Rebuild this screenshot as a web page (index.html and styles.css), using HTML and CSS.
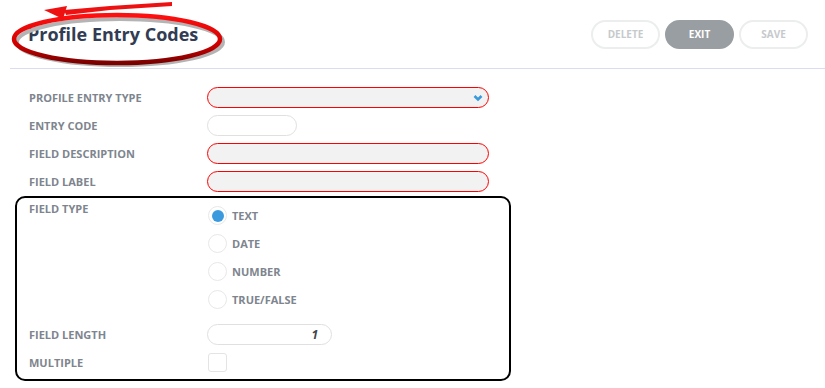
FILE: index.html
```html
<!DOCTYPE html>
<html lang="en">

<head>
    <meta charset="utf-8">
    <meta name="viewport" content="width=device-width, initial-scale=1.0">
    <title>Profile Entry Codes</title>
    <link rel="stylesheet" href="styles.css">
</head>

<body>
    <header class="top">
        <h1 class="title">Profile Entry Codes</h1>
        <div class="actions">
            <button class="btn">DELETE</button>
            <button class="btn btn-dark">EXIT</button>
            <button class="btn">SAVE</button>
        </div>
    </header>

    <!-- red marker drawn over the title -->
    <svg class="annot" width="240" height="72" viewBox="0 0 240 72">
        <defs>
            <linearGradient id="red" x1="0" y1="0" x2="0" y2="1">
                <stop offset="0" stop-color="#ff1010" />
                <stop offset="0.6" stop-color="#d00000" />
                <stop offset="1" stop-color="#7a0000" />
            </linearGradient>
        </defs>
        <ellipse cx="120" cy="42" rx="103" ry="23" fill="none" stroke="#b4b4b4" stroke-width="4" />
        <ellipse cx="117" cy="39" rx="103" ry="24" fill="none" stroke="url(#red)" stroke-width="4.5" />
        <path d="M172 2 L172 6 L110 10 L66 15 L64 10 L110 6 Z" fill="#ee1111" />
        <path d="M44 10 L67 6 L63 19 Z" fill="#ee1111" />
    </svg>

    <form class="form">
        <div class="row">
            <label>Profile Entry Type</label>
            <div class="field wide invalid select">
                <svg class="chev" width="10" height="8" viewBox="0 0 10 8">
                    <path d="M1.5 2 L5 5.5 L8.5 2" fill="none" stroke="#3b9ade" stroke-width="2.6" />
                </svg>
            </div>
        </div>
        <div class="row">
            <label>Entry Code</label>
            <div class="field short"></div>
        </div>
        <div class="row">
            <label>Field Description</label>
            <div class="field wide invalid"></div>
        </div>
        <div class="row">
            <label>Field Label</label>
            <div class="field wide invalid"></div>
        </div>

        <div class="box">
            <div class="row row-top">
                <label>Field Type</label>
                <div class="radios">
                    <div class="radio checked"><span class="dot"></span>Text</div>
                    <div class="radio"><span class="dot"></span>Date</div>
                    <div class="radio"><span class="dot"></span>Number</div>
                    <div class="radio"><span class="dot"></span>True/False</div>
                </div>
            </div>
            <div class="row row-len">
                <label>Field Length</label>
                <div class="field num">1</div>
            </div>
            <div class="row">
                <label>Multiple</label>
                <span class="check"></span>
            </div>
        </div>
    </form>
</body></html>
```

FILE: styles.css
```css
* {
    box-sizing: border-box;
}

body {
    margin: 0;
    font-family: 'Open Sans', sans-serif;
    background: #fff;
}

.top {
    display: flex;
    align-items: center;
    justify-content: space-between;
    height: 69px;
    margin-left: 10px;
    padding: 0 17px 0 18px;
    border-bottom: 1px solid #dcdcf0;
}

.title {
    margin: 0;
    font-size: 18px;
    font-weight: 700;
    color: #323c52;
}

.actions {
    display: flex;
    gap: 5px;
}

.btn {
    width: 69px;
    height: 29px;
    border: 2px solid #eceeee;
    border-radius: 15px;
    background: #fff;
    color: #c6cacc;
    font-family: 'Open Sans', sans-serif;
    font-size: 10px;
    font-weight: 700;
    cursor: pointer;
}

.btn-dark {
    background: #999ea2;
    border-color: #999ea2;
    color: #fff;
}

.annot {
    position: absolute;
    top: 0;
    left: 0;
}

.form {
    padding: 0 0 0 29px;
    margin-top: 14px;
}

.row {
    display: flex;
    align-items: center;
    height: 28px;
}

.row label {
    width: 178px;
    flex-shrink: 0;
    padding-top: 1px;
    font-size: 11px;
    font-weight: 700;
    text-transform: uppercase;
    color: #7e858e;
}

.field {
    position: relative;
    height: 21px;
    border: 1px solid #e0e0e0;
    border-radius: 11px;
    background: #fff;
}

.wide {
    width: 282px;
}

.short {
    width: 90px;
}

.invalid {
    border-color: #ff0000;
    background: #f2f2f2;
}

.chev {
    position: absolute;
    right: 5px;
    top: 6px;
}

.box {
    width: 496px;
    margin: 1px 0 0 -14px;
    padding: 3px 11px 3px 12px;
    border: 2px solid #000;
    border-radius: 10px;
}

.row-top {
    height: auto;
    align-items: flex-start;
}

.row-top label {
    padding-top: 0;
    line-height: 16px;
}

.radio {
    display: flex;
    align-items: center;
    height: 28px;
    padding-top: 1px;
    font-size: 11px;
    font-weight: 700;
    text-transform: uppercase;
    color: #7e858e;
}

.dot {
    display: flex;
    align-items: center;
    justify-content: center;
    width: 19px;
    height: 19px;
    margin: 0 5px 0 1px;
    border: 1px solid #e8e8e8;
    border-radius: 50%;
}

.checked .dot::after {
    content: "";
    width: 12px;
    height: 12px;
    border-radius: 50%;
    background: #3b9ade;
}

.row-len {
    margin-top: 7px;
}

.num {
    width: 125px;
    padding-right: 13px;
    text-align: right;
    font-size: 12px;
    font-weight: 700;
    font-style: italic;
    line-height: 19px;
    color: #3f4650;
}

.check {
    width: 19px;
    height: 19px;
    margin-left: 1px;
    border: 1px solid #e4e4e4;
    border-radius: 3px;
}
```
